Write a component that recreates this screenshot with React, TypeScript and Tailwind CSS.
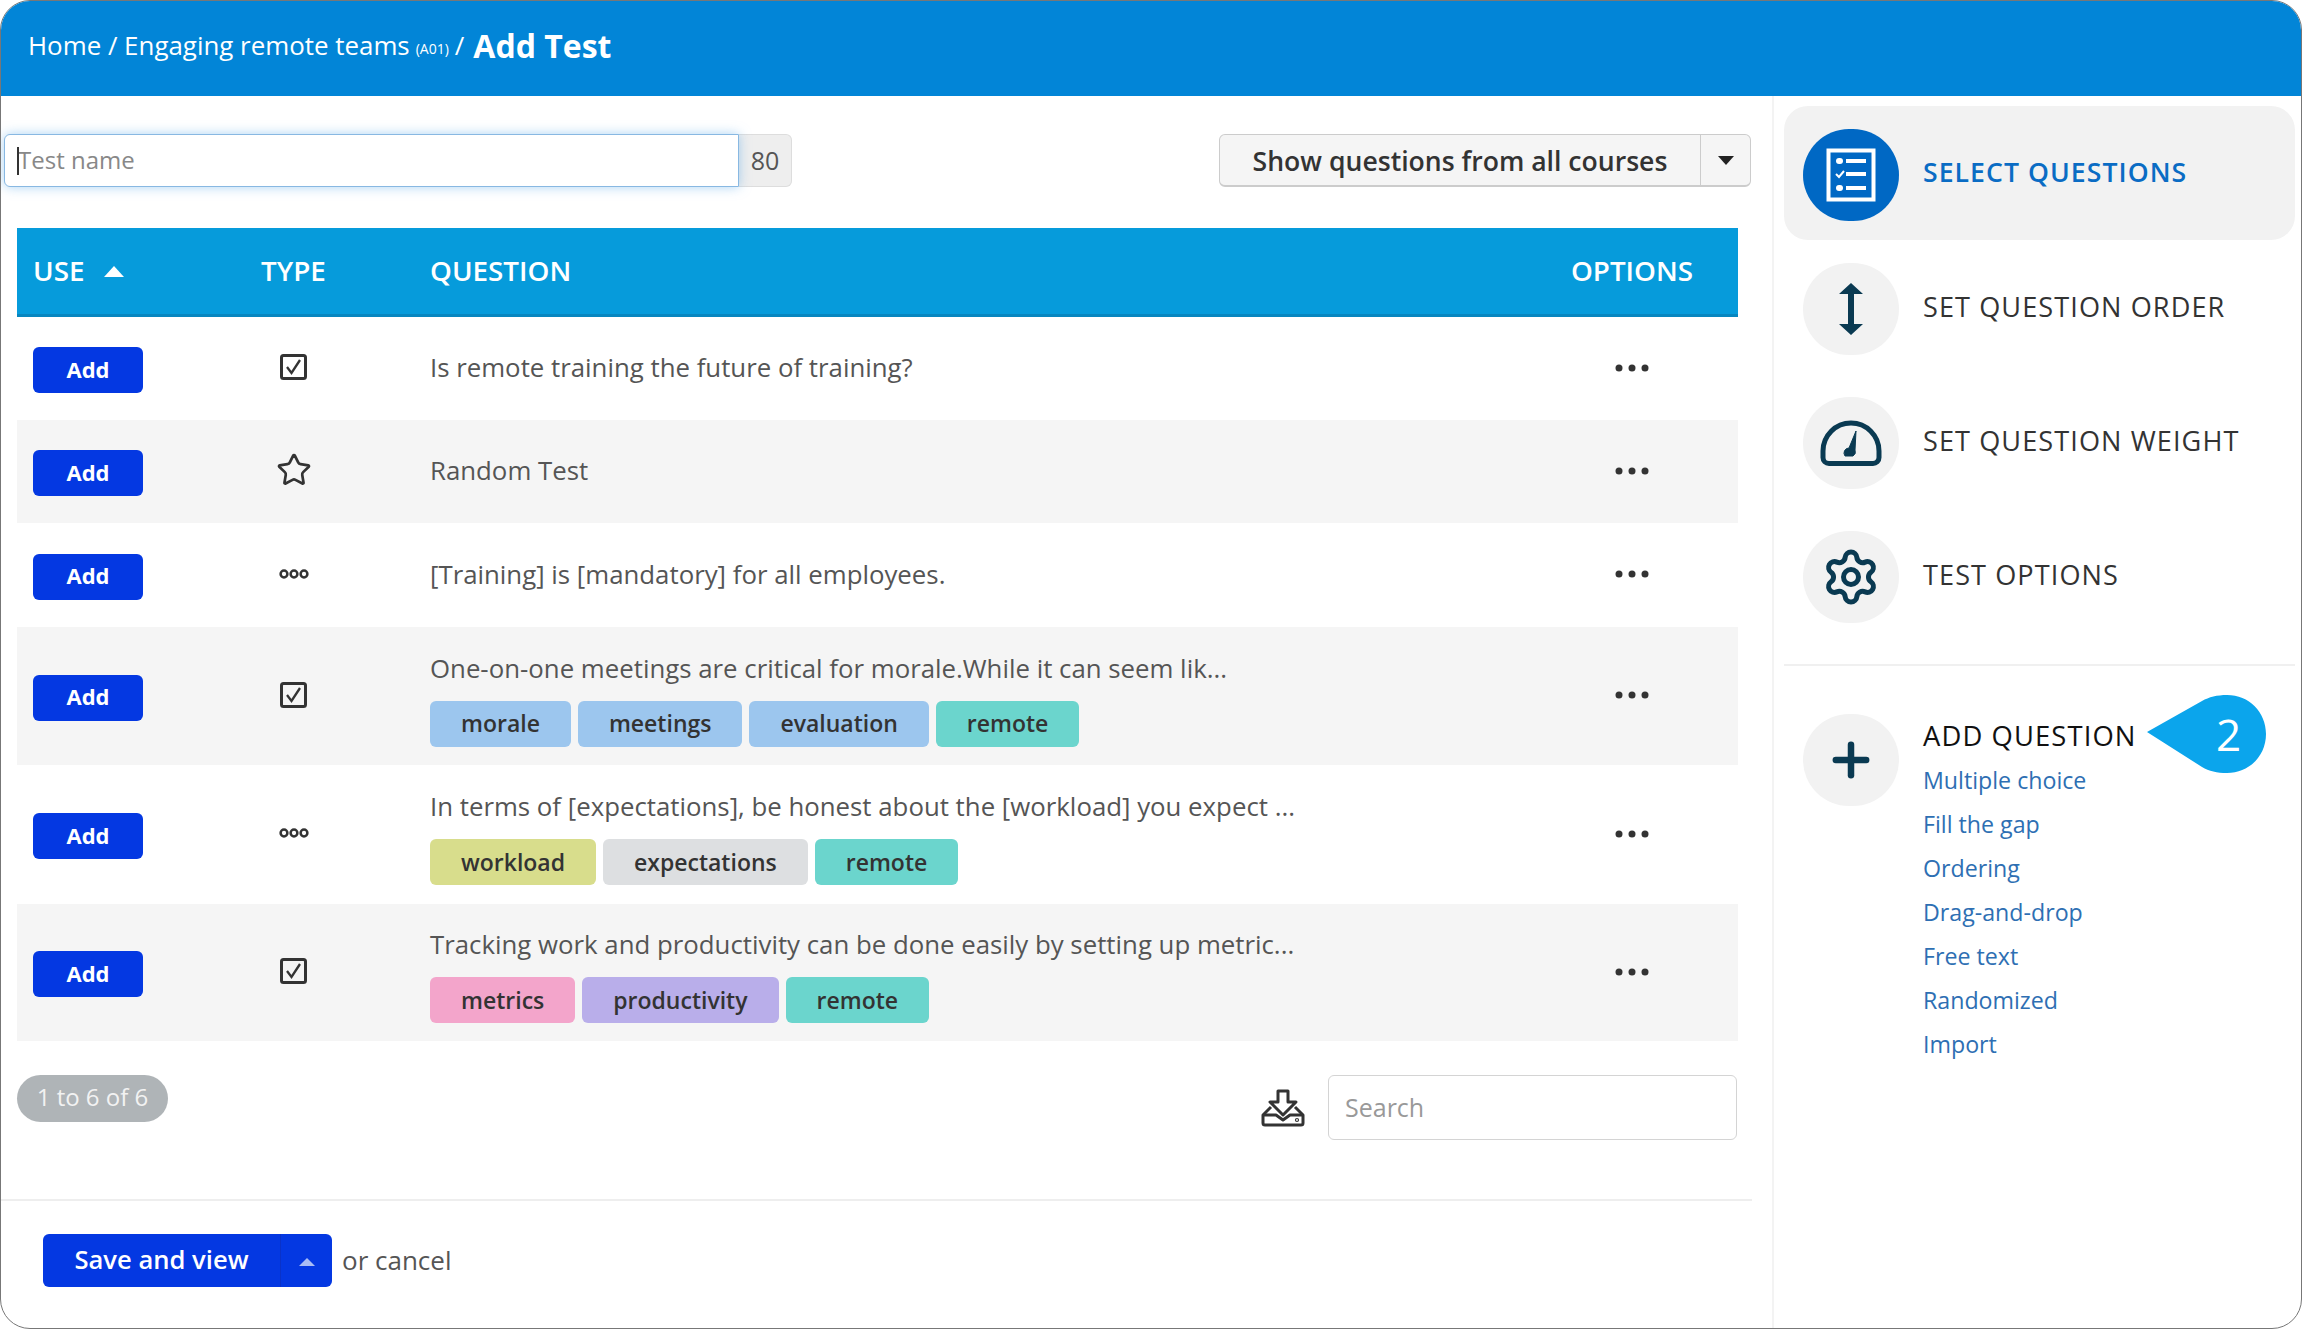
import { Plus, Settings, Star } from "lucide-react";

type Tag = { label: string; color: string };
type Question = { text: string; kind: "check" | "star" | "gap"; height: string; shaded?: boolean; tags?: Tag[] };

const questions: Question[] = [
  { text: "Is remote training the future of training?", kind: "check", height: "h-[103px]" },
  { text: "Random Test", kind: "star", height: "h-[103px]", shaded: true },
  { text: "[Training] is [mandatory] for all employees.", kind: "gap", height: "h-[104px]" },
  {
    text: "One-on-one meetings are critical for morale.While it can seem lik...",
    kind: "check",
    height: "h-[138px]",
    shaded: true,
    tags: [
      { label: "morale", color: "bg-[#9cc6ee]" },
      { label: "meetings", color: "bg-[#9cc6ee]" },
      { label: "evaluation", color: "bg-[#9cc6ee]" },
      { label: "remote", color: "bg-[#6bd5cd]" },
    ],
  },
  {
    text: "In terms of [expectations], be honest about the [workload] you expect ...",
    kind: "gap",
    height: "h-[139px]",
    tags: [
      { label: "workload", color: "bg-[#d8dd8c]" },
      { label: "expectations", color: "bg-[#dddfe1]" },
      { label: "remote", color: "bg-[#6bd5cd]" },
    ],
  },
  {
    text: "Tracking work and productivity can be done easily by setting up metric...",
    kind: "check",
    height: "h-[137px]",
    shaded: true,
    tags: [
      { label: "metrics", color: "bg-[#f3a5cb]" },
      { label: "productivity", color: "bg-[#b9aeea]" },
      { label: "remote", color: "bg-[#6bd5cd]" },
    ],
  },
];

const addLinks = ["Multiple choice", "Fill the gap", "Ordering", "Drag-and-drop", "Free text", "Randomized", "Import"];

function TypeIcon({ kind }: { kind: Question["kind"] }) {
  if (kind === "star") return <Star size={36} strokeWidth={1.8} className="text-[#333]" />;
  if (kind === "gap") {
    return (
      <svg width="30" height="12" viewBox="0 0 30 12" fill="none" stroke="#333" strokeWidth="2.5">
        <circle cx="5" cy="6" r="3.4" />
        <circle cx="15" cy="6" r="3.4" />
        <circle cx="25" cy="6" r="3.4" />
      </svg>
    );
  }
  return (
    <svg width="27" height="26" viewBox="0 0 27 26" fill="none" stroke="#333">
      <rect x="1.500" y="1.500" width="24" height="23" rx="2" strokeWidth="3" />
      <path d="M7 13l4.500 6 8.500-13" strokeWidth="2.300" />
    </svg>
  );
}

function Dots() {
  return (
    <svg width="36" height="8" viewBox="0 0 36 8" fill="#333">
      <circle cx="5" cy="4" r="3.5" />
      <circle cx="18" cy="4" r="3.5" />
      <circle cx="31" cy="4" r="3.5" />
    </svg>
  );
}

function QuestionRow({ q }: { q: Question }) {
  return (
    <div className={`grid grid-cols-[210px_133px_1fr_212px] items-center ${q.height} ${q.shaded ? "bg-[#f5f5f5]" : "bg-white"}`}>
      <div className="pl-4 pt-[3px]">
        <button className="flex h-[46px] w-[110px] items-center justify-center rounded-md bg-[#0438e2] pb-[2px] text-[22px] font-bold text-white">
          Add
        </button>
      </div>
      <div className="flex justify-center pb-[3px]">
        <TypeIcon kind={q.kind} />
      </div>
      <div className={`pl-[70px] text-[#555] ${q.tags ? "pt-[4px]" : "pb-[3px]"}`}>
        <div className="text-[25.8px] leading-[36px]">{q.text}</div>
        {q.tags && (
          <div className="mt-[15px] flex gap-[7px]">
            {q.tags.map((tag) => (
              <span key={tag.label} className={`flex h-[46px] items-center rounded-md px-[31px] text-[23px] font-semibold text-[#333] ${tag.color}`}>
                {tag.label}
              </span>
            ))}
          </div>
        )}
      </div>
      <div className="flex justify-center pb-[2px]">
        <Dots />
      </div>
    </div>
  );
}

function NavCircle({ active, children }: { active?: boolean; children: React.ReactNode }) {
  return (
    <div className={`flex h-[92px] w-[96px] shrink-0 items-center justify-center rounded-full ${active ? "bg-[#0068c4]" : "bg-[#f2f2f2]"}`}>
      {children}
    </div>
  );
}

function NavItem({ label, active, icon }: { label: string; active?: boolean; icon: React.ReactNode }) {
  return (
    <div className={`flex h-[134px] items-center gap-[24px] rounded-[24px] pl-[19px] ${active ? "bg-[#f2f2f2]" : ""}`}>
      <div className="pt-[3px]">
        <NavCircle active={active}>{icon}</NavCircle>
      </div>
      <span className={`tracking-[0.04em] ${active ? "text-[26.6px] font-semibold text-[#0a6cc4]" : "text-[27.1px] font-medium text-[#333]"}`}>{label}</span>
    </div>
  );
}

export default function App() {
  return (
    <div className="flex h-[1329px] w-[2302px] flex-col overflow-hidden rounded-[30px] border border-[#777] bg-white font-['Open_Sans',sans-serif]">
      <header className="flex h-[95px] shrink-0 items-center bg-[#0285d7] pb-[6px] pl-[27px] text-[25.9px] text-white">
        <span>Home / Engaging remote teams</span>
        <span className="ml-[6px] mt-[5px] text-[14px]">(A01)</span>
        <span className="ml-[6px]">/</span>
        <span className="ml-[9px] text-[32px] font-bold">Add Test</span>
      </header>

      <div className="flex min-h-0 flex-1">
        <main className="w-[1773px] shrink-0 border-r-2 border-[#f3f3f3] pt-[38px]">
          <div className="flex items-start justify-between pl-[3px] pr-[21px]">
            <div className="flex h-[53px]">
              <div className="relative h-full w-[735px] rounded-l-md border border-[#88b8e2] bg-white shadow-[0_0_12px_rgba(102,175,233,0.55)]">
                <span className="absolute left-[12px] top-[12px] h-[28px] w-[2px] bg-[#333]" />
                <input placeholder="Test name" className="h-full w-full bg-transparent pb-[2px] pl-[13px] text-[24px] text-[#555] outline-none placeholder:text-[#888]" />
              </div>
              <div className="flex w-[53px] items-center justify-center rounded-r-md border border-l-0 border-[#ddd] bg-[#eeeeee] text-[25px] text-[#555]">
                80
              </div>
            </div>
            <div className="flex h-[53px] w-[532px] rounded-md border border-b-2 border-[#ccc] bg-[#f5f5f5] text-[26.6px] font-semibold text-[#333]">
              <div className="flex flex-1 items-center justify-center border-r border-[#ccc] pt-[3px]">Show questions from all courses</div>
              <div className="flex w-[49px] items-center justify-center">
                <svg width="16" height="9" viewBox="0 0 16 9" fill="#222">
                  <path d="M0 0h16L8 9z" />
                </svg>
              </div>
            </div>
          </div>

          <div className="ml-[16px] mt-[41px] w-[1721px]">
            <div className="grid h-[89px] grid-cols-[210px_133px_1fr_212px] items-center border-b-[3px] border-[#0786bf] bg-[#069bdb] text-[27.8px] font-semibold text-white">
              <div className="flex items-center gap-[20px] pl-4">
                USE
                <svg width="20" height="11" viewBox="0 0 20 11" fill="#fff">
                  <path d="M10 0l10 11H0z" />
                </svg>
              </div>
              <div className="text-center">TYPE</div>
              <div className="pl-[70px]">QUESTION</div>
              <div className="text-center">OPTIONS</div>
            </div>
            {questions.map((q) => (
              <QuestionRow key={q.text} q={q} />
            ))}
          </div>

          <div className="mt-[34px] flex items-start justify-between pl-[16px] pr-[35px]">
            <div className="flex h-[47px] w-[151px] items-center justify-center rounded-full bg-[#afb4b7] pb-[3px] text-[24px] text-[#f2f2f2]">
              1 to 6 of 6
            </div>
            <div className="flex items-center gap-[23px]">
              <svg width="44" height="38" viewBox="0 0 44 38" fill="none" stroke="#333" strokeWidth="3" strokeLinejoin="round">
                <path d="M17 2h10v11h8L22 26 9 13h8z" />
                <path d="M10 18L2 26v8a2 2 0 0 0 2 2h36a2 2 0 0 0 2-2v-8l-8-8" />
                <path d="M2 26h13l7 5 7-5h13" />
                <circle cx="36" cy="31" r="0.6" />
              </svg>
              <div className="flex h-[65px] w-[409px] items-center rounded-md border border-[#d4d4d4] pl-[16px] text-[25px] text-[#999]">
                Search
              </div>
            </div>
          </div>

          <div className="mr-[20px] mt-[59px] border-t-2 border-[#eeeeee]" />

          <div className="ml-[42px] mt-[33px] flex items-center gap-[10px]">
            <div className="flex h-[53px] w-[289px] rounded-md bg-[#0438e2] text-white">
              <div className="flex w-[238px] items-center justify-center border-r border-[#0a32c8] text-[25.6px] font-semibold">Save and view</div>
              <div className="flex flex-1 items-center justify-center pt-[3px]">
                <svg width="16" height="8" viewBox="0 0 16 8" fill="#a9bdf5">
                  <path d="M8 0l8 8H0z" />
                </svg>
              </div>
            </div>
            <span className="text-[26px] text-[#555]">or cancel</span>
          </div>
        </main>

        <aside className="flex-1 pl-[10px] pr-[6px] pt-[10px]">
          <NavItem
            active
            label="SELECT QUESTIONS"
            icon={
              <svg width="50" height="54" viewBox="0 0 50 54" fill="none">
                <rect x="2.500" y="2.500" width="45" height="49" stroke="#fff" strokeWidth="4" />
                <g fill="#fff">
                  <rect x="10" y="10" width="7" height="6" rx="3" />
                  <rect x="20" y="11" width="20" height="4" />
                  <rect x="20" y="24" width="20" height="4" />
                  <rect x="10" y="37" width="7" height="6" rx="3" />
                  <rect x="20" y="38" width="20" height="4" />
                </g>
                <path d="M10 26l3 3 5-6" stroke="#fff" strokeWidth="2" />
              </svg>
            }
          />
          <NavItem
            label="SET QUESTION ORDER"
            icon={
              <svg width="24" height="52" viewBox="0 0 24 52" fill="#0a3a52">
                <path d="M12 0l12 11H15v30h9L12 52 0 41h9V11H0z" />
              </svg>
            }
          />
          <NavItem
            label="SET QUESTION WEIGHT"
            icon={
              <svg width="62" height="46" viewBox="0 0 62 46" fill="none" stroke="#0a3a52" strokeWidth="5">
                <path d="M9 43.500h44a6 6 0 0 0 6-6V31A28 28 0 0 0 3 31v6.500a6 6 0 0 0 6 6z" strokeLinejoin="round" />
                <path d="M25 36a5 5 0 0 1 4-8l7-17-1 19a5 5 0 0 1-2 6z" fill="#0a3a52" strokeWidth="1" />
              </svg>
            }
          />
          <NavItem label="TEST OPTIONS" icon={<Settings size={60} strokeWidth={2} className="text-[#0a3a52]" />} />

          <div className="mt-[22px] border-t-2 border-[#f0f0f0]" />

          <div className="relative mt-[48px] flex gap-[24px] pl-[19px]">
            <NavCircle>
              <Plus size={52} strokeWidth={3} className="text-[#0a3a52]" />
            </NavCircle>
            <div>
              <div className="text-[27.4px] font-medium leading-[44px] tracking-[0.04em] text-[#111]">ADD QUESTION</div>
              {addLinks.map((link) => (
                <div key={link} className="text-[23.2px] leading-[44px] text-[#2e6fb3]">
                  {link}
                </div>
              ))}
            </div>
            <div className="absolute left-[363px] top-[-19px]">
              <svg width="120" height="78" viewBox="0 0 120 78">
                <path d="M0 37L55 6C62 2 70 0 80 0c22 0 39 17 39 39S102 78 80 78c-10 0-18-2-25-6z" fill="#0ba5ec" />
              </svg>
              <span className="absolute left-[69px] top-[9px] text-[44px] leading-[60px] text-white">2</span>
            </div>
          </div>
        </aside>
      </div>
    </div>
  );
}
